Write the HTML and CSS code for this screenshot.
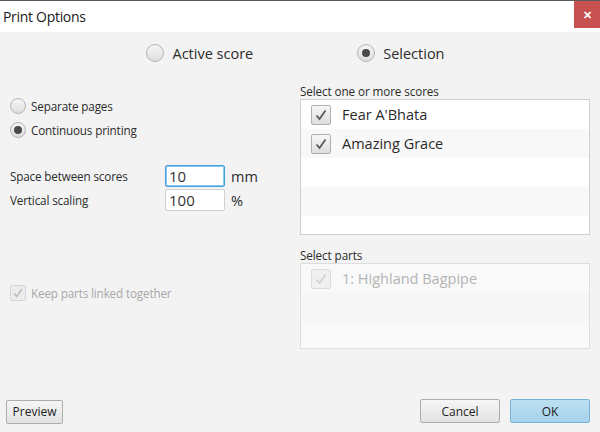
FILE: index.html
```html
<!DOCTYPE html>
<html lang="en">
<head>
    <meta charset="UTF-8">
    <title>Print Options</title>
    <link rel="stylesheet" href="styles.css">
</head>
<body>
    <div class="dialog">
        <div class="titlebar">
            <span class="title">Print Options</span>
            <span class="close">&#x2715;</span>
        </div>

        <div class="source-row">
            <label class="radio big"><span class="dot"></span>Active score</label>
            <label class="radio big checked"><span class="dot"></span>Selection</label>
        </div>

        <div class="main">
            <div class="left">
                <label class="radio small first"><span class="dot"></span>Separate pages</label>
                <label class="radio small checked"><span class="dot"></span>Continuous printing</label>

                <div class="field first-field">
                    <span class="field-label">Space between scores</span>
                    <span class="input focused">10</span>
                    <span class="unit">mm</span>
                </div>
                <div class="field">
                    <span class="field-label">Vertical scaling</span>
                    <span class="input">100</span>
                    <span class="unit">%</span>
                </div>

                <label class="check small disabled">
                    <span class="box">
                        <svg viewBox="0 0 16 16"><path d="M3.5 8.5 L6.5 12 L12.5 3.5"/></svg>
                    </span>
                    Keep parts linked together
                </label>
            </div>

            <div class="right">
                <div class="group-label">Select one or more scores</div>
                <div class="list scores">
                    <div class="row">
                        <span class="box"><svg viewBox="0 0 16 16"><path d="M3.5 8.5 L6.5 12 L12.5 3.5"/></svg></span>
                        Fear A'Bhata
                    </div>
                    <div class="row alt">
                        <span class="box"><svg viewBox="0 0 16 16"><path d="M3.5 8.5 L6.5 12 L12.5 3.5"/></svg></span>
                        Amazing Grace
                    </div>
                    <div class="row"></div>
                    <div class="row alt"></div>
                    <div class="row"></div>
                </div>

                <div class="group-label parts-label">Select parts</div>
                <div class="list parts">
                    <div class="row disabled">
                        <span class="box"><svg viewBox="0 0 16 16"><path d="M3.5 8.5 L6.5 12 L12.5 3.5"/></svg></span>
                        1: Highland Bagpipe
                    </div>
                    <div class="row alt"></div>
                    <div class="row"></div>
                </div>
            </div>
        </div>

        <div class="footer">
            <button class="btn preview">Preview</button>
            <div class="spacer"></div>
            <button class="btn">Cancel</button>
            <button class="btn default">OK</button>
        </div>
    </div>
</body>
</html>
```

FILE: styles.css
```css
html, body {
    margin: 0;
    padding: 0;
    height: 100%;
}
body {
    font-family: "Open Sans", "Noto Sans", sans-serif;
    color: #2b2b2b;
    background: #f3f3f3;
}
.dialog {
    display: flex;
    flex-direction: column;
    height: 432px;
    border-top: 1px solid #5a5a5a;
    box-sizing: border-box;
}
.titlebar {
    display: flex;
    align-items: flex-start;
    height: 31px;
    background: #fff;
}
.title {
    font-size: 14px;
    padding: 6px 0 0 3px;
    color: #1a1a1a;
    flex: 1;
    letter-spacing: -0.3px;
}
.close {
    width: 26px;
    height: 27px;
    background: #c75050;
    color: #fff;
    font-size: 11px;
    font-weight: bold;
    display: flex;
    align-items: center;
    justify-content: center;
}

/* radio buttons */
.radio {
    display: flex;
    align-items: center;
}
.radio .dot {
    box-sizing: border-box;
    border-radius: 50%;
    border: 1px solid #b4b4b4;
    background: linear-gradient(#f6f6f6, #dedede);
    display: flex;
    align-items: center;
    justify-content: center;
}
.radio.checked .dot::after {
    content: "";
    border-radius: 50%;
    background: #4a4a4a;
}
.radio.big {
    font-size: 14.5px;
    height: 18px;
}
.radio.big .dot {
    width: 18px;
    height: 18px;
    margin-right: 8px;
}
.radio.big.checked .dot::after {
    width: 8px;
    height: 8px;
}
.radio.small {
    font-size: 11.7px;
    height: 18px;
    letter-spacing: -0.15px;
}
.radio.small .dot {
    width: 16px;
    height: 16px;
    margin-right: 5px;
}
.radio.small.checked .dot::after {
    width: 8px;
    height: 8px;
}

.source-row {
    display: flex;
    justify-content: center;
    gap: 104px;
    margin-top: 12px;
    padding-right: 9px;
}

.main {
    display: grid;
    grid-template-columns: 290px 290px;
    padding: 0 10px;
    margin-top: 21px;
}
.left {
    display: flex;
    flex-direction: column;
}
.radio.first {
    margin-top: 14px;
    margin-bottom: 6px;
}
.field {
    display: flex;
    align-items: center;
    font-size: 11.7px;
    letter-spacing: -0.15px;
    height: 22px;
    margin-bottom: 2px;
}
.first-field {
    margin-top: 26px;
}
.field-label {
    width: 155px;
}
.input {
    box-sizing: border-box;
    width: 60px;
    height: 22px;
    background: #fff;
    border: 1px solid #d0d0d0;
    border-radius: 2px;
    font-size: 15px;
    letter-spacing: 0;
    padding-left: 3px;
    line-height: 20px;
    color: #333;
}
.input.focused {
    border-color: #3fa2d8;
    box-shadow: 0 0 0 1px #8cc9ec inset;
}
.unit {
    font-size: 14.5px;
    letter-spacing: 0;
    margin-left: 6px;
}

/* checkboxes */
.box {
    box-sizing: border-box;
    display: inline-flex;
    align-items: center;
    justify-content: center;
    border: 1px solid #b0b0b0;
    border-radius: 2px;
    background: linear-gradient(#f7f7f7, #dedede);
}
.box svg {
    fill: none;
    stroke: #5a5a5a;
    stroke-width: 1.8;
}
.check {
    display: flex;
    align-items: center;
    margin-top: 72px;
}
.check.small {
    font-size: 11.7px;
    letter-spacing: -0.15px;
}
.check.small .box {
    width: 16px;
    height: 16px;
    margin-right: 5px;
}
.check.disabled {
    color: #a8a8a8;
}
.check.disabled .box {
    border-color: #d6d6d6;
    background: #ececec;
}
.check.disabled .box svg {
    stroke: #bdbdbd;
}

.right {
    display: flex;
    flex-direction: column;
}
.group-label {
    font-size: 11.7px;
    letter-spacing: -0.1px;
    height: 16px;
    line-height: 16px;
}
.parts-label {
    margin-top: 12px;
}
.list {
    border: 1px solid #cfcfcf;
    background: #fff;
    overflow: hidden;
}
.list.scores {
    height: 136px;
    box-sizing: border-box;
}
.list.parts {
    height: 86px;
    box-sizing: border-box;
    background: #f9f9f9;
    border-color: #dedede;
}
.row {
    height: 29px;
    display: flex;
    align-items: center;
    font-size: 14.5px;
    padding-left: 10px;
    flex-shrink: 0;
}
.row.alt {
    background: #f8f8f8;
}
.row .box {
    width: 20px;
    height: 20px;
    margin-right: 11px;
}
.row .box svg {
    width: 16px;
    height: 16px;
}
.list.parts .row {
    background: #f9f9f9;
}
.list.parts .row.alt {
    background: #f6f6f6;
}
.row.disabled {
    color: #b4b4b4;
}
.row.disabled .box {
    border-color: #dcdcdc;
    background: #f0f0f0;
}
.row.disabled .box svg {
    stroke: #d2d2d2;
}

.footer {
    margin-top: auto;
    display: flex;
    align-items: center;
    padding: 0 10px 9px 6px;
}
.spacer {
    flex: 1;
}
.btn {
    font-family: inherit;
    font-size: 12px;
    color: #222;
    height: 24px;
    border: 1px solid #acacac;
    border-radius: 2px;
    background: linear-gradient(#f6f6f6, #e2e2e2);
    padding: 0;
}
.btn.preview {
    width: 57px;
    margin-bottom: -1px;
}
.btn + .btn {
    margin-left: 10px;
}
.footer .btn:not(.preview) {
    width: 80px;
}
.btn.default {
    border-color: #7ab3d6;
    background: linear-gradient(#bde0f2, #a5d2ea);
}
```
